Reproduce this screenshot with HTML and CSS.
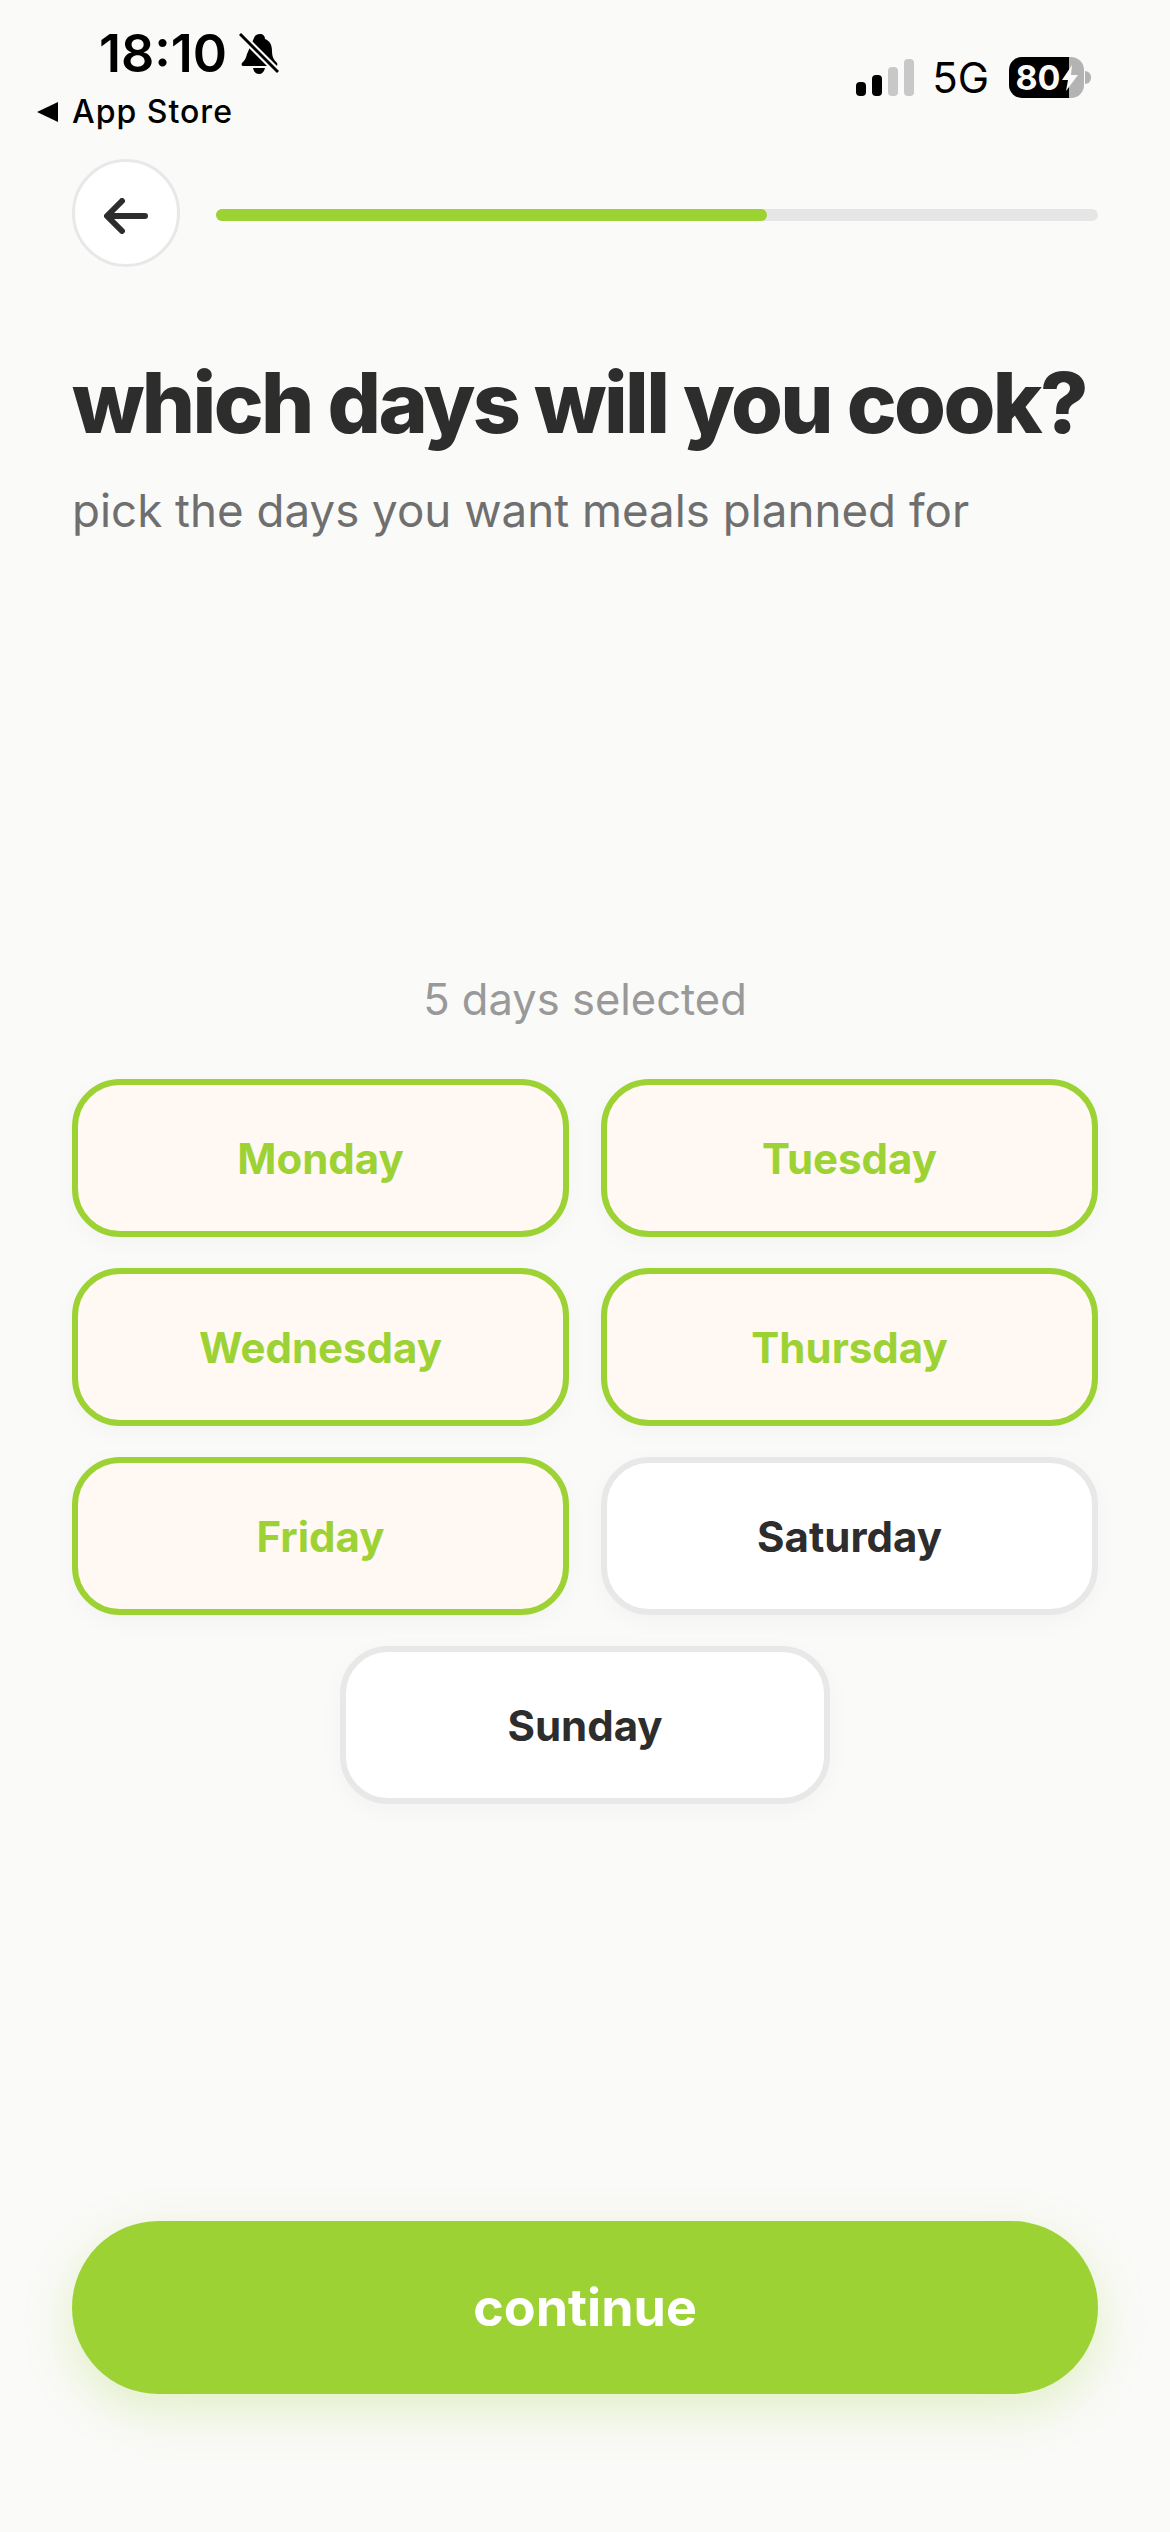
FILE: index.html
```html
<!DOCTYPE html>
<html lang="en">
  <head>
    <meta charset="UTF-8" />
    <meta name="viewport" content="width=device-width, initial-scale=1.0" />
    <title>which days will you cook?</title>
    <link rel="stylesheet" href="styles.css">
  </head>

  <body>
    <div class="status-bar">
      <div class="status-left">
        <div class="time-row">
          <span class="time">18:10</span>
          <svg class="bell-icon" viewBox="0 0 40 42">
            <path d="M21 1c3 0 5 2 5 5 5 2 7 6 7 12 0 6 2 9 5 12 1 2 0 3-2 3H5c-2 0-3-1-2-3 3-3 4-5 5-9L15 5c1-3 3-4 6-4z" fill="#000"/>
            <path d="M14 35h12c-1 4-3 6-6 6s-5-2-6-6z" fill="#000"/>
            <path d="M1 1l38 38" stroke="#fafaf8" stroke-width="7" fill="none"/>
            <path d="M1 1l38 38" stroke="#000" stroke-width="3" fill="none"/>
          </svg>
        </div>
        <div class="back-app">
          <svg class="back-app-icon" viewBox="0 0 22 22"><path d="M0 11L21 1v20z" fill="#000"/></svg>
          <span>App Store</span>
        </div>
      </div>
      <div class="status-right">
        <div class="signal">
          <span class="bar bar-1"></span>
          <span class="bar bar-2"></span>
          <span class="bar bar-3"></span>
          <span class="bar bar-4"></span>
        </div>
        <span class="network">5G</span>
        <div class="battery">
          <div class="battery-body">
            <span>80</span>
            <svg class="bolt-icon" viewBox="0 0 16 26"><path d="M10 0L0 15h6l-2 11L16 10H9z" fill="#fafaf8"/></svg>
          </div>
          <span class="battery-nub"></span>
        </div>
      </div>
    </div>

    <div class="top-row">
      <button class="back-button">
        <svg class="back-icon" viewBox="0 0 44 36">
          <path d="M41 18H4M18 3L3 18l15 15" stroke="#2d2d2d" stroke-width="6" stroke-linecap="round" stroke-linejoin="round" fill="none"/>
        </svg>
      </button>
      <div class="progress"><div class="progress-fill"></div></div>
    </div>

    <h1 class="title">which days will you cook?</h1>
    <p class="subtitle">pick the days you want meals planned for</p>

    <p class="count">5 days selected</p>

    <div class="days">
      <button class="day selected">Monday</button>
      <button class="day selected">Tuesday</button>
      <button class="day selected">Wednesday</button>
      <button class="day selected">Thursday</button>
      <button class="day selected">Friday</button>
      <button class="day">Saturday</button>
      <button class="day sunday">Sunday</button>
    </div>

    <button class="continue-button">continue</button>
  </body>
</html>
```

FILE: styles.css
```css
body{
  margin: 0;
  height: 2532px;
  overflow: hidden;
  background-color: #fafaf8;
  color: #2d2d2d;
  font-family: Inter, "Liberation Sans", sans-serif;
}

.status-bar{
  display: flex;
  justify-content: space-between;
  height: 159px;
  padding: 0 79px 0 37px;
  box-sizing: border-box;
}

.time-row{
  display: flex;
  align-items: center;
  gap: 12px;
  margin: 25px 0 0 62px;
}

.time{
  color: #000;
  font-size: 52px;
  font-weight: 600;
  line-height: 58px;
}

.bell-icon{
  width: 40px;
  height: 42px;
}

.back-app{
  display: flex;
  align-items: center;
  gap: 13px;
  margin-top: 9px;
  color: #000;
  font-size: 32px;
  font-weight: 500;
  line-height: 40px;
  letter-spacing: 1px;
}

.back-app-icon{
  width: 22px;
  height: 22px;
}

.status-right{
  display: flex;
  align-items: flex-start;
  padding-top: 57px;
}

.signal{
  display: flex;
  align-items: flex-end;
  gap: 6px;
  height: 37px;
  margin: 2px 18px 0 0;
}

.bar{
  width: 10px;
  border-radius: 4px;
  background-color: #000;
}

.bar-1{
  height: 14px;
}

.bar-2{
  height: 21px;
}

.bar-3{
  height: 29px;
  background-color: #c8c8c8;
}

.bar-4{
  height: 37px;
  background-color: #c8c8c8;
}

.network{
  margin-right: 20px;
  color: #000;
  font-size: 42px;
  line-height: 41px;
}

.battery{
  display: flex;
  align-items: center;
}

.battery-body{
  display: flex;
  align-items: center;
  justify-content: center;
  gap: 1px;
  width: 75px;
  height: 41px;
  border-radius: 13px;
  background: linear-gradient(90deg, #000 80%, #b3b3b3 80%);
  color: #fafaf8;
  font-size: 34px;
  font-weight: 700;
}

.bolt-icon{
  width: 16px;
  height: 26px;
}

.battery-nub{
  width: 6px;
  height: 13px;
  margin-left: 1px;
  border-radius: 0 6px 6px 0;
  background-color: #b3b3b3;
}

.top-row{
  display: flex;
  align-items: center;
  gap: 36px;
  padding: 0 72px;
}

.back-button{
  display: flex;
  align-items: center;
  justify-content: center;
  flex-shrink: 0;
  width: 108px;
  height: 108px;
  padding: 5px 0 0;
  background-color: white;
  border: 3px solid #e8e8e8;
  border-radius: 50%;
}

.back-icon{
  width: 44px;
  height: 36px;
}

.progress{
  flex: 1;
  height: 12px;
  margin-top: 3px;
  border-radius: 6px;
  background-color: #e6e6e6;
}

.progress-fill{
  width: 551px;
  height: 12px;
  border-radius: 6px;
  background-color: #9dd234;
}

.title{
  margin: 85px 0 0 72px;
  font-size: 84px;
  font-weight: 800;
  line-height: 102px;
  letter-spacing: -2.65px;
  white-space: nowrap;
}

.subtitle{
  margin: 27px 0 0 72px;
  color: #6f6f6f;
  font-size: 45.7px;
  line-height: 60px;
}

.count{
  margin: 430px 0 0;
  color: #999;
  font-size: 43.5px;
  line-height: 56px;
  text-align: center;
}

.days{
  display: flex;
  flex-wrap: wrap;
  justify-content: center;
  gap: 31px 32px;
  margin-top: 52px;
  padding: 0 72px;
}

.day{
  width: 497px;
  height: 158px;
  padding: 0;
  background-color: white;
  border: 6px solid #e8e8e8;
  border-radius: 48px;
  box-shadow: 0 6px 24px rgba(0, 0, 0, 0.03);
  color: #2d2d2d;
  font-family: inherit;
  font-size: 42px;
  font-weight: 700;
}

.day.selected{
  background-color: #fff8f3;
  border-color: #9dd234;
  color: #9dd234;
}

.sunday{
  width: 490px;
}

.continue-button{
  display: block;
  width: 1026px;
  height: 173px;
  margin: 417px 0 0 72px;
  background-color: #9dd234;
  border: none;
  border-radius: 87px;
  box-shadow: 0 16px 48px rgba(157, 210, 52, 0.25);
  color: white;
  font-family: inherit;
  font-size: 52px;
  font-weight: 700;
}
```
